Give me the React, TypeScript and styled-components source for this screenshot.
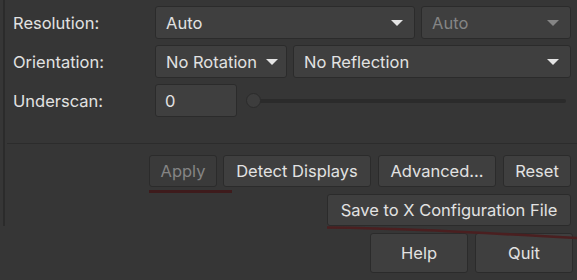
import styled, { createGlobalStyle } from "styled-components";

const GlobalStyle = createGlobalStyle`
  html, body {
    margin: 0;
    padding: 0;
    background: #363636;
    width: 577px;
    height: 280px;
    overflow: hidden;
  }
  body {
    font-family: Inter, "Noto Sans", sans-serif;
    font-size: 16.5px;
    color: #e2e2e2;
  }
`;

const Page = styled.div`
  position: relative;
  width: 577px;
  height: 280px;
  display: flex;
  flex-direction: column;
`;

const Frame = styled.div`
  margin-left: 3px;
  border-left: 2px solid #2b2b2b;
  height: 226px;
  display: flex;
  flex-direction: column;
`;

const TopStub = styled.div`
  margin: -8px 6px 0 150px;
  height: 8px;
  background: #3f3f3f;
  border: 1px solid #2b2b2b;
  border-top: none;
  border-radius: 0 0 3px 3px;
`;

const Form = styled.div`
  display: grid;
  grid-template-columns: 142px 1fr;
  grid-auto-rows: 33px;
  row-gap: 6px;
  padding: 6px 6px 0 8px;
`;

const Label = styled.div`
  display: flex;
  align-items: center;
  padding-top: 1px;
`;

const Cell = styled.div`
  display: flex;
  align-items: stretch;
  gap: 6px;
`;

const Combo = styled.div<{ $disabled?: boolean; $width?: number; $grow?: boolean }>`
  box-sizing: border-box;
  display: flex;
  align-items: center;
  gap: 9px;
  padding: 0 11px 0 10px;
  background: #3f3f3f;
  border: 1px solid #2b2b2b;
  border-radius: 3px;
  color: ${(p) => (p.$disabled ? "#858585" : "#e2e2e2")};
  ${(p) => (p.$width ? `width: ${p.$width}px; flex: none;` : "")}
  ${(p) => (p.$grow ? "flex: 1;" : "")}
`;

const ComboText = styled.span`
  flex: 1;
  white-space: nowrap;
`;

const Arrow = styled.span<{ $disabled?: boolean }>`
  flex: none;
  width: 0;
  height: 0;
  border-left: 6px solid transparent;
  border-right: 6px solid transparent;
  border-top: 6px solid ${(p) => (p.$disabled ? "#858585" : "#e4e4e4")};
`;

const Entry = styled.div`
  box-sizing: border-box;
  width: 82px;
  display: flex;
  align-items: center;
  padding-left: 9px;
  background: #3f3f3f;
  border: 1px solid #2b2b2b;
  border-radius: 3px;
`;

const Slider = styled.div`
  flex: 1;
  display: flex;
  align-items: center;
  margin: 0 5px 0 3px;
  position: relative;
`;

const Trough = styled.div`
  flex: 1;
  height: 4px;
  margin-left: 8px;
  background: #2b2b2b;
  border-radius: 2px;
`;

const Knob = styled.div`
  position: absolute;
  left: 0;
  top: 50%;
  width: 15px;
  height: 15px;
  margin-top: -8px;
  box-sizing: border-box;
  border-radius: 50%;
  background: #3d3d3d;
  border: 1px solid #2b2b2b;
`;

const Separator = styled.div`
  margin: 26px 0 0 2px;
  height: 1px;
  background: #2c2c2c;
`;

const ButtonRow = styled.div<{ $top: number; $right: number; $gap: number }>`
  display: flex;
  justify-content: flex-end;
  gap: ${(p) => p.$gap}px;
  margin-top: ${(p) => p.$top}px;
  padding-right: ${(p) => p.$right}px;
`;

const Button = styled.div<{ $disabled?: boolean; $width: number; $height?: number }>`
  box-sizing: border-box;
  width: ${(p) => p.$width}px;
  height: ${(p) => p.$height ?? 32}px;
  display: flex;
  align-items: center;
  justify-content: center;
  white-space: nowrap;
  background: ${(p) => (p.$disabled ? "#3a3a3a" : "#3f3f3f")};
  border: 1px solid #2b2b2b;
  border-radius: 3px;
  color: ${(p) => (p.$disabled ? "#858585" : "#e2e2e2")};
`;

const Smear = styled.svg`
  position: absolute;
  left: 0;
  top: 0;
  pointer-events: none;
`;

export default function App() {
  return (
    <Page>
      <GlobalStyle />
      <Frame>
        <TopStub />
        <Form>
          <Label>Resolution:</Label>
          <Cell>
            <Combo $grow>
              <ComboText>Auto</ComboText>
              <Arrow />
            </Combo>
            <Combo $disabled $width={150}>
              <ComboText>Auto</ComboText>
              <Arrow $disabled />
            </Combo>
          </Cell>
          <Label>Orientation:</Label>
          <Cell>
            <Combo $width={132}>
              <ComboText>No Rotation</ComboText>
              <Arrow />
            </Combo>
            <Combo $grow>
              <ComboText>No Reflection</ComboText>
              <Arrow />
            </Combo>
          </Cell>
          <Label>Underscan:</Label>
          <Cell>
            <Entry>0</Entry>
            <Slider>
              <Trough />
              <Knob />
            </Slider>
          </Cell>
        </Form>
        <Separator />
        <ButtonRow $top={11} $right={6} $gap={6}>
          <Button $disabled $width={68}>Apply</Button>
          <Button $width={148}>Detect Displays</Button>
          <Button $width={118} style={{ marginLeft: 1 }}>Advanced...</Button>
          <Button $width={68} style={{ marginLeft: 1 }}>Reset</Button>
        </ButtonRow>
        <ButtonRow $top={7} $right={6} $gap={6}>
          <Button $width={244}>Save to X Configuration File</Button>
        </ButtonRow>
      </Frame>
      <ButtonRow $top={7} $right={4} $gap={7}>
        <Button $width={98} $height={40}>Help</Button>
        <Button $width={98} $height={40}>Quit</Button>
      </ButtonRow>
      <Smear width="577" height="280">
        <rect x="149" y="190" width="83" height="3" fill="#3e1b1c" />
        <path d="M327 227.5 C 390 228, 450 231, 577 238" stroke="#4a1f20" strokeWidth="2.5" fill="none" />
      </Smear>
    </Page>
  );
}
